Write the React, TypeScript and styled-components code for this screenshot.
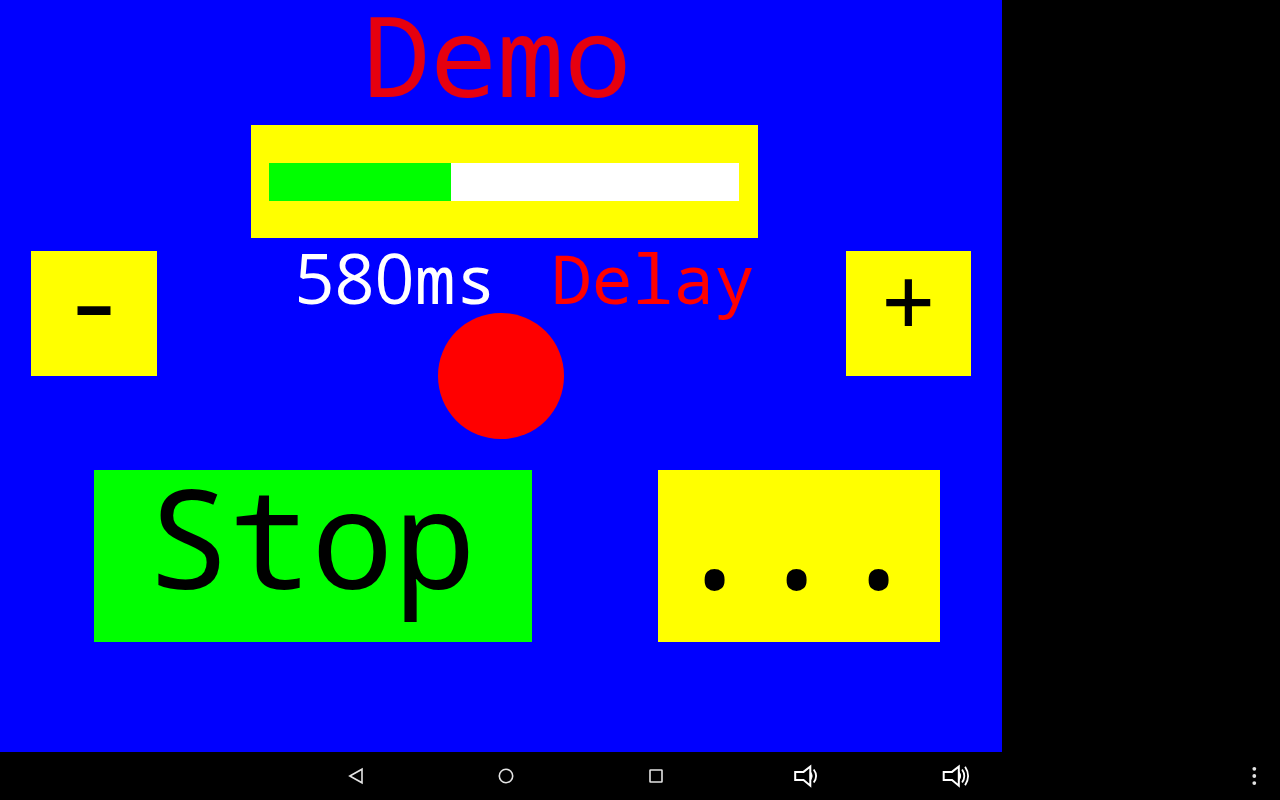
import React from "react";
import styled, { createGlobalStyle } from "styled-components";

const MONO = '"Droid Sans Mono", "Noto Sans Mono", "DejaVu Sans Mono", monospace';
const ROUND = '"Open Sans", "Noto Sans", sans-serif';

const GlobalStyle = createGlobalStyle`
  * { box-sizing: border-box; }
  body { margin: 0; background: #000; font-family: ${MONO}; }
`;

const Page = styled.div`
  min-height: 100vh;
  display: flex;
  flex-direction: column;
  background: #000;
`;

/* The stage is divided into 32 columns and 48 half-height rows. */
const Stage = styled.main`
  flex: 1;
  width: 78.3%;
  display: grid;
  grid-template-columns: repeat(32, minmax(0, 1fr));
  grid-template-rows: repeat(48, minmax(0, 1fr));
  background: #00f;
`;

const Title = styled.h1`
  grid-area: 1 / 9 / span 8 / span 16;
  margin: 0;
  padding-right: 8px;
  font-size: 112px;
  font-weight: 400;
  line-height: 108px;
  text-align: center;
  color: #e6000f;
`;

const Meter = styled.div`
  grid-area: 9 / 9 / span 8 / span 17;
  width: 507px;
  height: 113px;
  padding: 38px 19px 37px 18px;
  background: #ff0;
`;

const Progress = styled.progress`
  display: block;
  appearance: none;
  width: 100%;
  height: 38px;
  border: 0;
  background: #fff;
  &::-webkit-progress-bar { background: #fff; }
  &::-webkit-progress-value { background: #0f0; }
  &::-moz-progress-bar { background: #0f0; }
`;

const Readout = styled.div`
  grid-area: 17 / 9 / span 5 / span 17;
  display: flex;
  justify-content: space-between;
  align-items: baseline;
  padding: 0 28px 0 44px;
  font-size: 68px;
  line-height: 53px;
  white-space: nowrap;
`;

const Value = styled.output`
  color: #fff;
`;

const Digits = styled.span`
  font-family: ${ROUND};
  font-size: 70px;
`;

const Label = styled.label`
  color: #f00;
`;

const Lamp = styled.div`
  grid-area: 21 / 15 / span 8 / span 4;
  border-radius: 50%;
  background: #f00;
`;

const Pad = styled.button<{ $area: string; $color?: string; $size: number; $line: number }>`
  grid-area: ${(p) => p.$area};
  display: flex;
  justify-content: center;
  align-items: flex-start;
  min-width: 0;
  margin: 0;
  padding: 0;
  border: 0;
  background: ${(p) => p.$color ?? "#ff0"};
  color: #000;
  font-family: ${MONO};
  font-size: ${(p) => p.$size}px;
  line-height: ${(p) => p.$line}px;
  cursor: pointer;
`;

const WidePad = styled(Pad)`
  padding-right: 4px;
`;

const Dot = styled.span`
  width: 82px;
  font-family: ${ROUND};
  text-align: center;
`;

const NavBar = styled.nav`
  height: 48px;
  display: grid;
  grid-template-columns: 1fr auto 1fr;
  padding-left: 32px;
  background: #000;
`;

const NavKeys = styled.div`
  grid-column: 2;
  display: flex;
`;

const NavKey = styled.button<{ $width: number }>`
  width: ${(p) => p.$width}px;
  height: 48px;
  display: flex;
  align-items: center;
  justify-content: center;
  justify-self: end;
  padding: 0;
  border: 0;
  background: transparent;
  color: #e4e4e4;
  cursor: pointer;
`;

const Icon = ({ children }: { children: React.ReactNode }) => (
  <svg width="32" height="32" viewBox="0 0 32 32" fill="none" stroke="currentColor" strokeWidth="1.6" aria-hidden="true">
    {children}
  </svg>
);

const speaker = (
  <>
    <path d="M5.2 11.9h8.3l6.8-5.4v19.2l-6.8-5.7H5.2z" stroke="#fff" strokeWidth="2" />
    <path d="M20.3 11.5q3.6 4.5 0 9z" fill="#fff" stroke="#fff" strokeWidth="1" />
  </>
);

export default function App() {
  return (
    <>
      <GlobalStyle />
      <Page>
        <Stage>
          <Title>Demo</Title>
          <Meter>
            <Progress id="delay" value={580} max={1495} />
          </Meter>
          <Readout>
            <Value htmlFor="delay"><Digits>580</Digits>ms</Value>
            <Label htmlFor="delay">Delay</Label>
          </Readout>
          <Pad $area="17 / 2 / span 8 / span 4" $size={110} $line={92} aria-label="Decrease delay">-</Pad>
          <Pad $area="17 / 28 / span 8 / span 4" $size={100} $line={96} aria-label="Increase delay">+</Pad>
          <Lamp />
          <WidePad $area="31 / 4 / span 11 / span 14" $color="#0f0" $size={137} $line={132}>Stop</WidePad>
          <WidePad $area="31 / 22 / span 11 / span 9" $size={172} $line={104} aria-label="More">
            <Dot>.</Dot>
            <Dot>.</Dot>
            <Dot>.</Dot>
          </WidePad>
        </Stage>
        <NavBar>
          <NavKeys>
            <NavKey $width={150} aria-label="Back">
              <Icon><path d="M22 9.2v13.6L9.8 16z" /></Icon>
            </NavKey>
            <NavKey $width={150} aria-label="Home">
              <Icon><circle cx="16" cy="16" r="6.7" /></Icon>
            </NavKey>
            <NavKey $width={150} aria-label="Recent apps">
              <Icon><rect x="10" y="10" width="12" height="12" rx="0.5" /></Icon>
            </NavKey>
            <NavKey $width={150} aria-label="Volume down">
              <Icon>
                {speaker}
                <path d="M23.7 9.5q4.8 6.5 0 13" stroke="#fff" strokeWidth="1.8" />
              </Icon>
            </NavKey>
            <NavKey $width={150} aria-label="Volume up">
              <Icon>
                <g transform="translate(-1.5 0)">
                  {speaker}
                  <path d="M23.6 9.5q4.4 6.5 0 13M26.6 6.8q6 9.2 0 18.4" stroke="#fff" strokeWidth="1.8" />
                </g>
              </Icon>
            </NavKey>
          </NavKeys>
          <NavKey $width={52} aria-label="Menu">
            <Icon>
              <g fill="currentColor" stroke="none">
                <circle cx="16.3" cy="8.8" r="1.9" />
                <circle cx="16.3" cy="16" r="1.9" />
                <circle cx="16.3" cy="23.1" r="1.9" />
              </g>
            </Icon>
          </NavKey>
        </NavBar>
      </Page>
    </>
  );
}
